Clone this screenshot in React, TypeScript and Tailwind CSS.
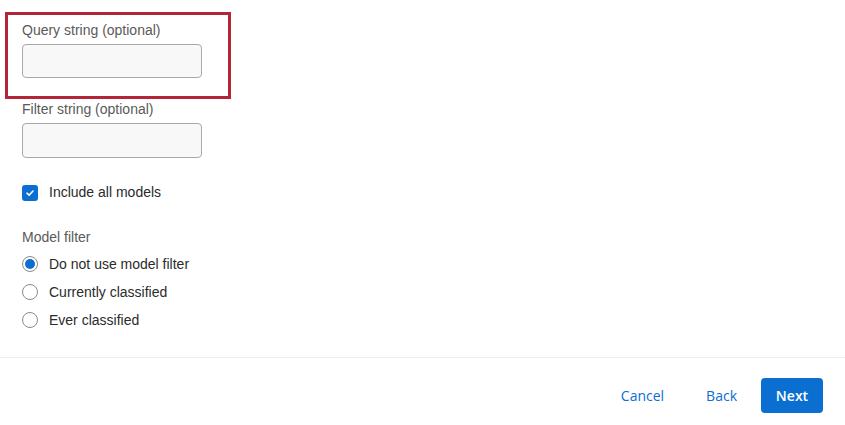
import { useState } from "react";

const font = { fontFamily: '"Liberation Sans", Arial, sans-serif' };

const RadioRow = ({ label, checked, onClick }: { label: string; checked: boolean; onClick: () => void }) => (
  <button type="button" onClick={onClick} className="flex h-[28px] items-center gap-[11px] text-left">
    <span className="flex h-[16px] w-[16px] items-center justify-center rounded-full border border-[#8a8a8a] bg-white">
      {checked && <span className="h-[10px] w-[10px] rounded-full bg-[#0b6ed3]" />}
    </span>
    <span className="text-[14px] text-[#2b2b2b]">{label}</span>
  </button>
);

export default function App() {
  const [includeAll, setIncludeAll] = useState(true);
  const [modelFilter, setModelFilter] = useState("none");

  return (
    <div className="relative h-[425px] w-[845px] bg-white" style={font}>
      {/* highlight around query string */}
      <div className="pointer-events-none absolute left-[5px] top-[12px] h-[87px] w-[226px] border-[3px] border-[#b3263a]" />

      <div className="flex flex-col pl-[22px] pt-[21px]">
        <label className="h-[18px] text-[14px] leading-[18px] text-[#5a5a5a]">Query string (optional)</label>
        <input className="mt-[5px] h-[34px] w-[180px] rounded-[4px] border border-[#a8a8a8] bg-[#f8f8f8] px-2 text-[14px] outline-none" />

        <label className="mt-[22px] h-[18px] text-[14px] leading-[18px] text-[#5a5a5a]">Filter string (optional)</label>
        <input className="mt-[5px] h-[35px] w-[180px] rounded-[4px] border border-[#a8a8a8] bg-[#f8f8f8] px-2 text-[14px] outline-none" />

        <button type="button" onClick={() => setIncludeAll(!includeAll)} className="mt-[24px] flex items-center gap-[11px] text-left">
          <span
            className={
              "flex h-[16px] w-[16px] items-center justify-center rounded-[3px] " +
              (includeAll ? "bg-[#0b6ed3]" : "border border-[#8a8a8a] bg-white")
            }
          >
            {includeAll && (
              <svg width="10" height="10" viewBox="0 0 10 10" fill="none">
                <path d="M2 5.2 L4.1 7.2 L8 3" stroke="white" strokeWidth="1.6" strokeLinecap="round" strokeLinejoin="round" />
              </svg>
            )}
          </span>
          <span className="text-[14px] text-[#2b2b2b]">Include all models</span>
        </button>

        <span className="mt-[25px] h-[18px] text-[14px] leading-[18px] text-[#5a5a5a]">Model filter</span>
        <div className="mt-[4px] flex flex-col">
          <RadioRow label="Do not use model filter" checked={modelFilter === "none"} onClick={() => setModelFilter("none")} />
          <RadioRow label="Currently classified" checked={modelFilter === "current"} onClick={() => setModelFilter("current")} />
          <RadioRow label="Ever classified" checked={modelFilter === "ever"} onClick={() => setModelFilter("ever")} />
        </div>
      </div>

      <div className="mt-[23px] border-t border-[#ececec]" />

      <div className="flex items-center justify-end pr-[22px] pt-[20px]" style={{ fontFamily: '"Open Sans", "Liberation Sans", sans-serif' }}>
        <button type="button" className="px-[12px] text-[14px] text-[#0b6ed3]">Cancel</button>
        <button type="button" className="ml-[18px] px-[12px] text-[14px] text-[#0b6ed3]">Back</button>
        <button type="button" className="ml-[12px] h-[35px] w-[62px] rounded-[4px] bg-[#0b6fd1] text-[14px] font-semibold text-white">Next</button>
      </div>
    </div>
  );
}
